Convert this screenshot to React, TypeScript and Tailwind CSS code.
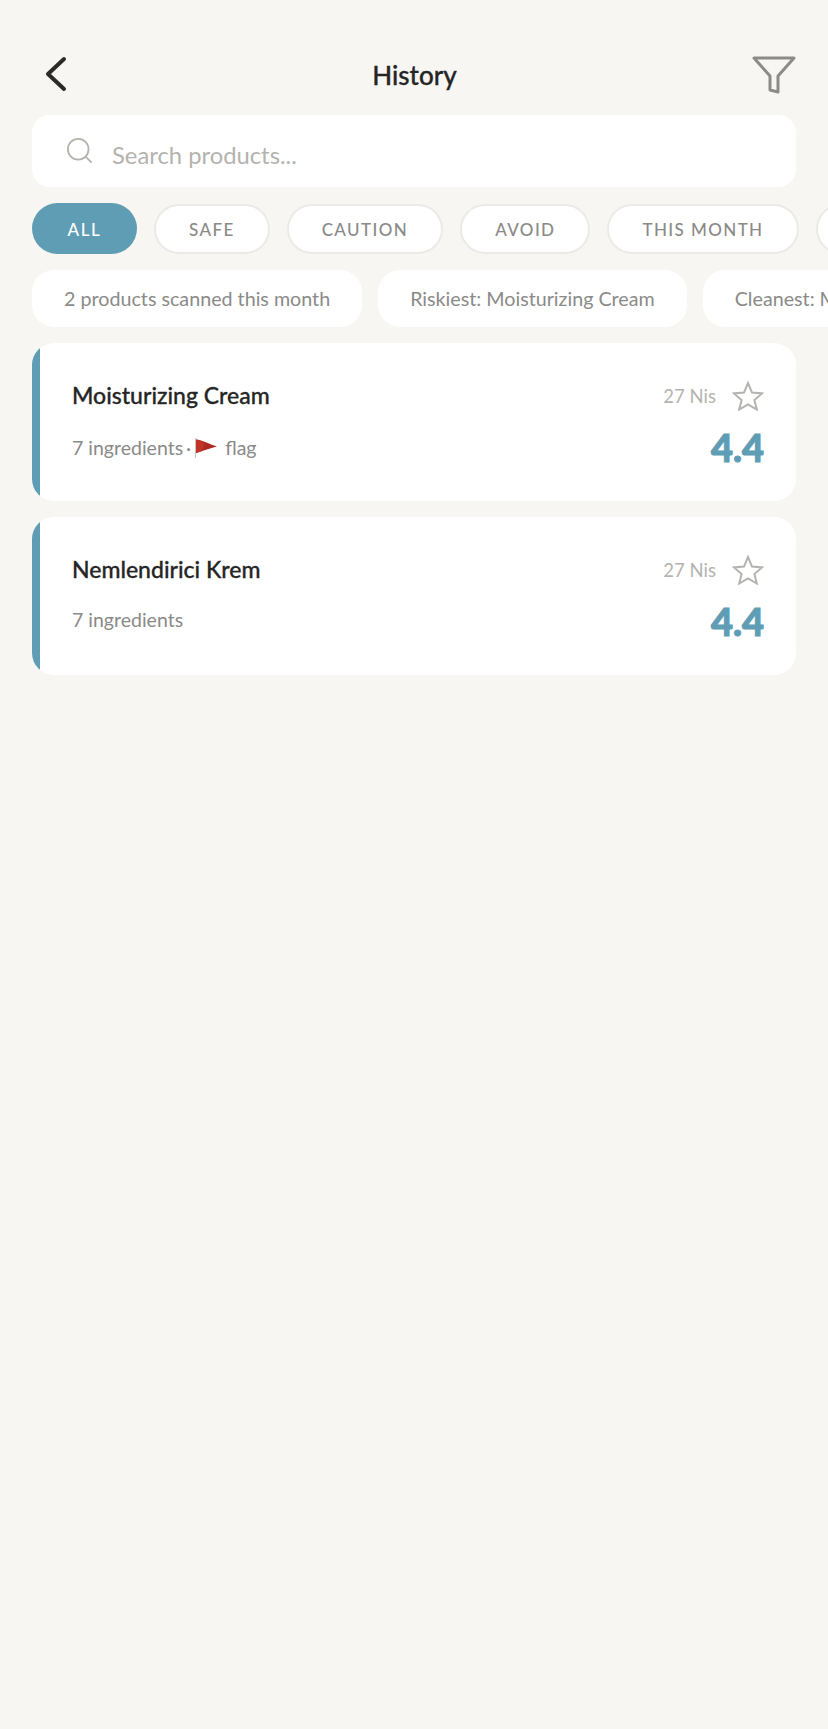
import { Search } from "lucide-react";

const filters = ["SAFE", "CAUTION", "AVOID", "THIS MONTH", "FAVORITES"];

const insights = [
  "2 products scanned this month",
  "Riskiest: Moisturizing Cream",
  "Cleanest: Moisturizing Cream",
];

const FlagIcon = () => (
  <svg width="24" height="22" viewBox="0 0 24 22" className="shrink-0">
    <rect x="1" y="1" width="1" height="20" fill="#c9c4c0" />
    <path d="M2 2.5 C8 3 15 7 23 9.5 C16 11 8 14.5 2 16 Z" fill="#ac2a20" />
    <path d="M2 2.5 C5 3 8 4 10 5 L9 13.5 C6.5 14.5 4 15.5 2 16 Z" fill="#c0342a" />
  </svg>
);

const StarIcon = () => (
  <svg width="32" height="30" viewBox="0 0 32 30" fill="none" className="-mt-[2px] shrink-0">
    <path
      d="M16 2L20 11.6L30 12.4L22.4 19L24.8 28.5L16 23.4L7.2 28.5L9.6 19L2 12.4L12 11.6Z"
      stroke="#b4b3b0"
      strokeWidth="2"
      strokeLinejoin="miter"
    />
  </svg>
);

const ProductCard = ({ name, flagged }: { name: string; flagged?: boolean }) => (
  <div className="flex h-[158px] overflow-hidden rounded-[22px] bg-white">
    <div className="w-2 shrink-0 bg-[#5f9db5]" />
    <div className="flex flex-1 pl-[32px] pr-[32px]">
      <div className="flex flex-1 flex-col pt-[34px]">
        <div className="text-[23px] leading-[36px] font-medium text-[#252525] [-webkit-text-stroke:0.3px_#252525]">
          {name}
        </div>
        {flagged ? (
          <div className="mt-[20px] flex h-[30px] items-center text-[19.5px] text-[#8a8a88]">
            <span>7 ingredients</span>
            <span className="mx-[3px]">·</span>
            <FlagIcon />
            <span className="ml-[7px]">flag</span>
          </div>
        ) : (
          <div className="mt-[18px] flex h-[30px] items-center text-[19.5px] text-[#8a8a88]">
            7 ingredients
          </div>
        )}
      </div>
      <div className="flex flex-col items-end pt-[36px]">
        <div className="flex h-[36px] items-center gap-[16px]">
          <span className="text-[18.5px] text-[#b4b3b0]">27 Nis</span>
          <StarIcon />
        </div>
        <div className="mt-[9px] text-[38px] leading-[46px] font-black text-[#5f9db5] [-webkit-text-stroke:1px_#5f9db5]">
          4.4
        </div>
      </div>
    </div>
  </div>
);

export default function App() {
  return (
    <div className="h-[1729px] overflow-hidden bg-[#f7f6f2] font-['Lato',sans-serif]">
      <div className="flex h-[115px] items-start justify-between pl-[44px] pr-[32px] pt-[56px]">
        <svg width="24" height="36" viewBox="0 0 24 36" fill="none">
          <path
            d="M20 3L4 18L20 33"
            stroke="#2a2a28"
            strokeWidth="4"
            strokeLinecap="round"
            strokeLinejoin="round"
          />
        </svg>
        <h1 className="ml-[9px] text-[26px] leading-[38px] font-medium text-[#252525] [-webkit-text-stroke:0.3px_#252525]">
          History
        </h1>
        <svg width="44" height="38" viewBox="0 0 44 38" fill="none">
          <path
            d="M2 2H42L26 20V36L18 34V20Z"
            stroke="#8b8b87"
            strokeWidth="3"
            strokeLinejoin="round"
          />
        </svg>
      </div>

      <div className="mx-[32px] flex h-[72px] items-center rounded-[18px] bg-white pl-[32px]">
        <Search className="-mt-[1px] h-[31px] w-[31px] text-[#b4b3ae]" strokeWidth={1.4} />
        <span className="ml-[17px] pt-[10px] text-[23.8px] text-[#b4b3ae]">Search products...</span>
      </div>

      <div className="mt-[16px] flex items-center gap-[17px] overflow-hidden pl-[32px]">
        <div className="flex h-[51px] w-[105px] shrink-0 items-center justify-center rounded-full bg-[#5f9db5] pt-[2px] text-[17px] font-medium tracking-[1.6px] text-white">
          ALL
        </div>
        {filters.map((filter) => (
          <div
            key={filter}
            className="flex h-[50px] shrink-0 items-center rounded-full border-2 border-[#ebeae7] bg-white px-[33px] pt-[2px] text-[17px] font-medium tracking-[1.4px] text-[#8a8a88]"
          >
            {filter}
          </div>
        ))}
      </div>

      <div className="mt-[16px] flex gap-[16px] overflow-hidden pl-[32px]">
        {insights.map((text) => (
          <div
            key={text}
            className="flex h-[57px] shrink-0 items-center rounded-[22px] bg-white px-[32px] text-[19.7px] text-[#8a8a88]"
          >
            {text}
          </div>
        ))}
      </div>

      <div className="mx-[32px] mt-[16px] flex flex-col gap-[16px]">
        <ProductCard name="Moisturizing Cream" flagged />
        <ProductCard name="Nemlendirici Krem" />
      </div>
    </div>
  );
}
